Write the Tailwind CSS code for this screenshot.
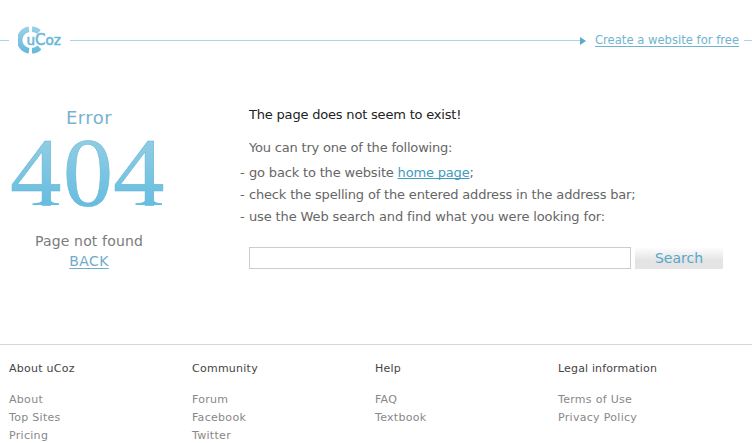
<!DOCTYPE html>
<html lang="en">
<head>
<meta charset="utf-8">
<title>Error 404</title>
<script src="https://cdn.jsdelivr.net/npm/@tailwindcss/browser@4"></script>
</head>
<body class="w-[752px] h-[443px] overflow-hidden bg-white font-['Verdana','DejaVu_Sans',sans-serif] text-[13px] text-[#666]">
<header class="flex items-center h-[81px] whitespace-nowrap">
  <div class="w-[9px] h-px bg-[#a9d5e5]"></div>
  <svg class="ml-[9px] -mt-[2px] shrink-0" width="44" height="28" viewBox="0 0 44 28">
    <defs><linearGradient id="logo" x1="0" y1="0" x2="0" y2="28" gradientUnits="userSpaceOnUse"><stop offset="0" stop-color="#9bd3e8"/><stop offset="1" stop-color="#62b8da"/></linearGradient></defs>
    <g fill="none" stroke="url(#logo)" stroke-width="5.500">
      <path d="M11 3.300A10.800 10.800 0 0 0 11 24.700"/>
      <path d="M14 3.300A11 11 0 0 1 21 6"/>
      <path d="M14 24.700A11 11 0 0 0 21.500 21.500"/>
    </g>
    <text x="8.500" y="18.500" font-family="DejaVu Sans" font-size="14" textLength="34.500" lengthAdjust="spacingAndGlyphs" fill="#6ab9d9" stroke="#6ab9d9" stroke-width=".6">u<tspan font-size="15.500">C</tspan>oz</text>
  </svg>
  <div class="ml-[8px] w-[510px] h-px bg-[#a9d5e5]"></div>
  <svg width="7" height="8" viewBox="0 0 7 8" class="shrink-0"><path d="M0 0L6 4L0 8Z" fill="#5aabc9"/></svg>
  <a class="ml-[8px] w-[144px] text-[11.6px] text-[#71b4d0] underline underline-offset-2 [text-decoration-skip-ink:none]">Create a website for free</a>
  <div class="ml-[5px] w-[8px] h-px bg-[#a9d5e5]"></div>
</header>
<main class="flex h-[263px] whitespace-nowrap">
  <section class="w-[178px] shrink-0 text-center pt-[25px]">
    <h1 class="text-[18px] leading-[24px] tracking-[0.4px] text-[#79b2d0]">Error</h1>
    <svg width="178" height="84" viewBox="0 0 178 84" class="block overflow-visible">
      <defs><linearGradient id="num" x1="0" y1="8" x2="0" y2="76" gradientUnits="userSpaceOnUse"><stop offset="0" stop-color="#92cde4"/><stop offset="1" stop-color="#65bde1"/></linearGradient></defs>
      <g fill="url(#num)" stroke="#69b5d2" stroke-width=".5" font-family="Liberation Serif" font-size="98">
        <text y="74.500" x="10" textLength="51.500" lengthAdjust="spacingAndGlyphs">4</text>
        <text y="74.500" x="63" textLength="50" lengthAdjust="spacingAndGlyphs">0</text>
        <text y="74.500" x="113" textLength="51.500" lengthAdjust="spacingAndGlyphs">4</text>
        <path stroke="none" d="M32.500 75v-1.700q9-.3 9.500-2.800h9q.5 2.500 8 2.800V75ZM135.500 75v-1.700q9-.3 9.500-2.800h9q.5 2.500 8 2.800V75Z"/>
      </g>
    </svg>
    <p class="mt-[17px] text-[14px] leading-[20px] tracking-[0.15px] text-[#7b7b7b]">Page not found</p>
    <a class="block text-[14px] leading-[20px] tracking-[0.4px] text-[#71abca] underline underline-offset-2">BACK</a>
  </section>
  <section class="pl-[62px] pt-[25px]">
    <h2 class="pl-[9px] leading-[18px] tracking-[-0.19px] text-[#222]">The page does not seem to exist!</h2>
    <p class="pl-[9px] mt-[15px] leading-[18px] tracking-[-0.19px]">You can try one of the following:</p>
    <ul class="mt-[5px] leading-[22px]">
      <li class="flex tracking-[-0.17px]"><span class="w-[9px]">-</span><span>go back to the website <a class="text-[#439bbd] underline underline-offset-1 [text-decoration-skip-ink:none]">home page</a>;</span></li>
      <li class="flex tracking-[-0.17px]"><span class="w-[9px]">-</span><span>check the spelling of the entered address in the address bar;</span></li>
      <li class="flex tracking-[-0.13px]"><span class="w-[9px]">-</span><span>use the Web search and find what you were looking for:</span></li>
    </ul>
    <form class="flex pl-[9px] mt-[19px]">
      <input class="w-[382px] h-[22px] border border-[#ccc]">
      <button type="button" class="ml-[4px] w-[88px] h-[22px] bg-linear-to-b from-white to-[#e4e4e4] to-60% text-[14px] leading-[22px] text-[#5aa7c6]">Search</button>
    </form>
  </section>
</main>
<footer class="flex h-[99px] border-t border-[#d6d6d6] pl-[9px] pt-[15px] text-[11px] leading-[18px] tracking-[0.3px] text-[#888] whitespace-nowrap">
  <div class="w-[183px]"><h3 class="mb-[13px] tracking-[0.25px] text-[#444]">About uCoz</h3><p>About</p><p>Top Sites</p><p>Pricing</p></div>
  <div class="w-[183px]"><h3 class="mb-[13px] tracking-[0.25px] text-[#444]">Community</h3><p>Forum</p><p>Facebook</p><p>Twitter</p></div>
  <div class="w-[183px]"><h3 class="mb-[13px] tracking-[0.25px] text-[#444]">Help</h3><p>FAQ</p><p>Textbook</p></div>
  <div><h3 class="mb-[13px] tracking-[0.15px] text-[#444]">Legal information</h3><p>Terms of Use</p><p>Privacy Policy</p></div>
</footer>
</body>
</html>
